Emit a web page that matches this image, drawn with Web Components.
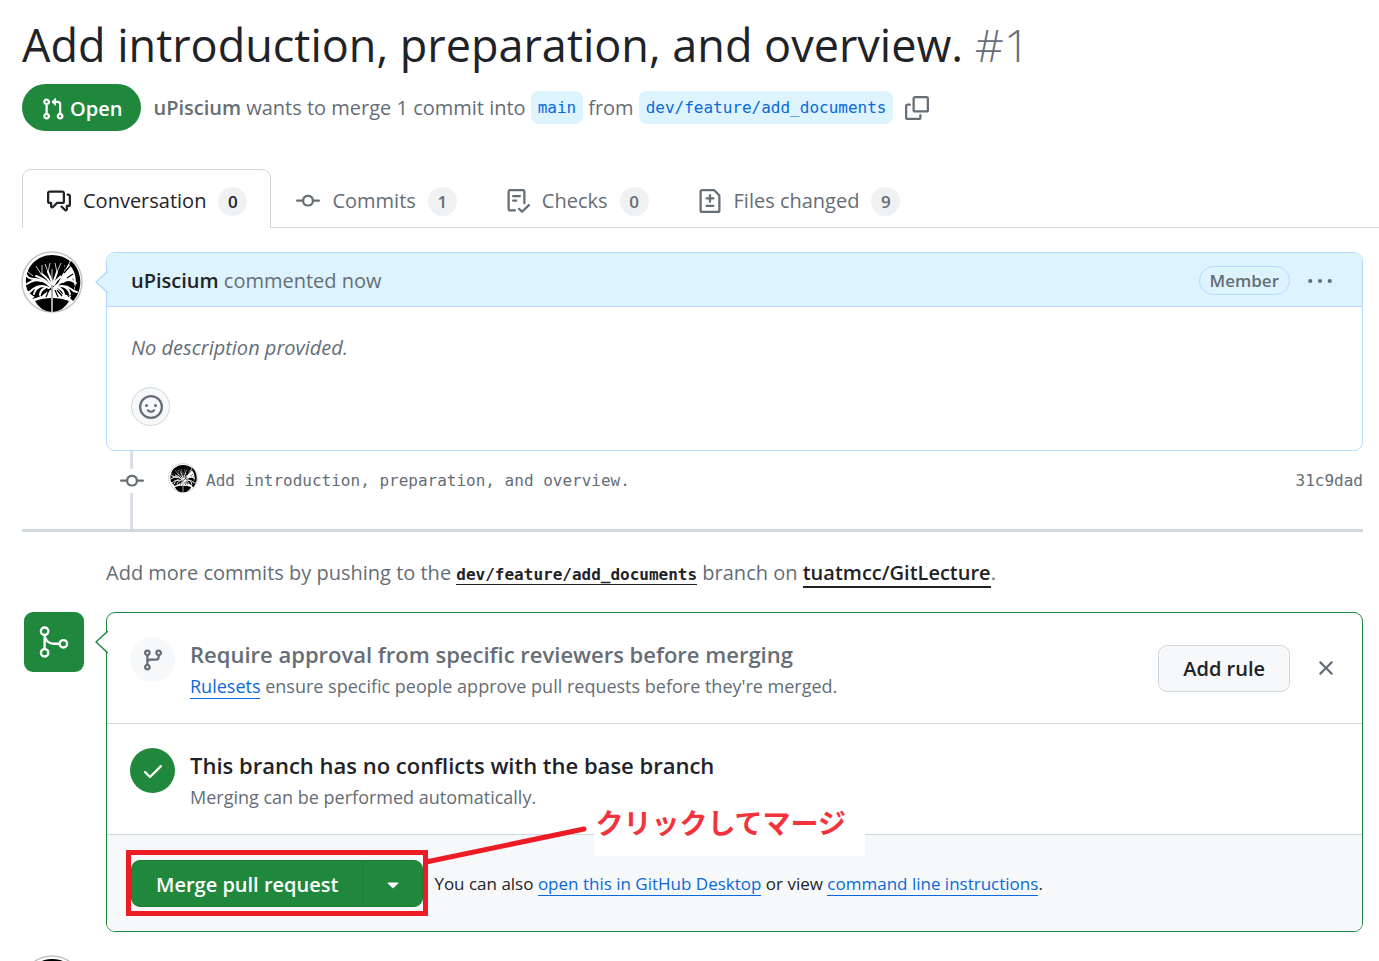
<!DOCTYPE html>
<html lang="en">
<head>
<meta charset="utf-8">
<title>Add introduction, preparation, and overview. #1</title>
<style>
  :root {
    --fg: #1f2328;
    --muted: #656d76;
    --accent: #0969da;
    --accent-subtle: #ddf4ff;
    --accent-border: #b6daff;
    --border: #d0d7de;
    --subtle: #f6f8fa;
    --green: #1f883d;
    --note: #ed1c24;
    --mono: "DejaVu Sans Mono", monospace;
    scrollbar-width: none;
  }
  body {
    margin: 0;
    background: #fff;
    color: var(--fg);
    font: 20px/30px "Open Sans", "Noto Sans", sans-serif;
  }
</style>
</head>
<body>
<pull-request-page></pull-request-page>

<script>
const define = (name, html, setup) => {
  const template = document.createElement('template');
  template.innerHTML = html;
  customElements.define(name, class extends HTMLElement {
    constructor() {
      super();
      this.attachShadow({ mode: 'open' }).append(template.content.cloneNode(true));
    }
    connectedCallback() { if (setup) setup(this, this.shadowRoot); }
  });
};

const ICONS = {
  'pull-request': '<path d="M1.5 3.25a2.25 2.25 0 1 1 3 2.122v5.256a2.251 2.251 0 1 1-1.5 0V5.372A2.25 2.25 0 0 1 1.5 3.25Zm5.677-.177L9.573.677A.25.25 0 0 1 10 .854V2.5h1A2.5 2.5 0 0 1 13.5 5v5.628a2.251 2.251 0 1 1-1.5 0V5a1 1 0 0 0-1-1h-1v1.646a.25.25 0 0 1-.427.177L7.177 3.427a.25.25 0 0 1 0-.354ZM3.75 2.5a.75.75 0 1 0 0 1.5.75.75 0 0 0 0-1.5Zm0 9.5a.75.75 0 1 0 0 1.5.75.75 0 0 0 0-1.5Zm8.25.75a.75.75 0 1 0 1.5 0 .75.75 0 0 0-1.5 0Z"/>',
  copy: '<path d="M0 6.75C0 5.784.784 5 1.75 5h1.5a.75.75 0 0 1 0 1.5h-1.5a.25.25 0 0 0-.25.25v7.5c0 .138.112.25.25.25h7.5a.25.25 0 0 0 .25-.25v-1.5a.75.75 0 0 1 1.5 0v1.5A1.75 1.75 0 0 1 9.25 16h-7.5A1.75 1.75 0 0 1 0 14.25Z"/><path d="M5 1.75C5 .784 5.784 0 6.75 0h7.5C15.216 0 16 .784 16 1.75v7.5A1.75 1.75 0 0 1 14.25 11h-7.5A1.75 1.75 0 0 1 5 9.25Zm1.75-.25a.25.25 0 0 0-.25.25v7.5c0 .138.112.25.25.25h7.5a.25.25 0 0 0 .25-.25v-7.5a.25.25 0 0 0-.25-.25Z"/>',
  discussion: '<path d="M1.75 1h8.5c.966 0 1.75.784 1.75 1.75v5.5A1.75 1.75 0 0 1 10.25 10H7.061l-2.574 2.573A1.458 1.458 0 0 1 2 11.543V10h-.25A1.75 1.75 0 0 1 0 8.25v-5.5C0 1.784.784 1 1.75 1ZM1.5 2.75v5.5c0 .138.112.25.25.25h1a.75.75 0 0 1 .75.75v2.19l2.72-2.72a.749.749 0 0 1 .53-.22h3.5a.25.25 0 0 0 .25-.25v-5.5a.25.25 0 0 0-.25-.25h-8.5a.25.25 0 0 0-.25.25Zm13 2a.25.25 0 0 0-.25-.25h-.5a.75.75 0 0 1 0-1.5h.5c.966 0 1.75.784 1.75 1.75v5.5A1.75 1.75 0 0 1 14.25 12H14v1.543a1.458 1.458 0 0 1-2.487 1.03L9.22 12.28a.749.749 0 0 1 .326-1.275.749.749 0 0 1 .734.215l2.22 2.22v-2.19a.75.75 0 0 1 .75-.75h1a.25.25 0 0 0 .25-.25Z"/>',
  commit: '<path d="M11.93 8.5a4.002 4.002 0 0 1-7.86 0H.75a.75.75 0 0 1 0-1.5h3.32a4.002 4.002 0 0 1 7.86 0h3.32a.75.75 0 0 1 0 1.5Zm-1.43-.75a2.5 2.5 0 1 0-5 0 2.5 2.5 0 0 0 5 0Z"/>',
  checklist: '<path d="M2.5 1.75v11.5c0 .138.112.25.25.25h3.17a.75.75 0 0 1 0 1.5H2.75A1.75 1.75 0 0 1 1 13.25V1.75C1 .784 1.784 0 2.75 0h8.5C12.216 0 13 .784 13 1.75v7.736a.75.75 0 0 1-1.5 0V1.75a.25.25 0 0 0-.25-.25h-8.5a.25.25 0 0 0-.25.25Zm13.274 9.537-4.557 4.449a.75.75 0 0 1-1.055-.008l-1.943-1.95a.75.75 0 0 1 1.062-1.058l1.419 1.425 4.026-3.932a.75.75 0 1 1 1.048 1.074ZM4.75 4h4.5a.75.75 0 0 1 0 1.5h-4.5a.75.75 0 0 1 0-1.5ZM4 7.75A.75.75 0 0 1 4.75 7h2a.75.75 0 0 1 0 1.5h-2A.75.75 0 0 1 4 7.75Z"/>',
  diff: '<path d="M1 1.75C1 .784 1.784 0 2.75 0h7.586c.464 0 .909.184 1.237.513l2.914 2.914c.329.328.513.773.513 1.237v9.586A1.75 1.75 0 0 1 13.25 16H2.75A1.75 1.75 0 0 1 1 14.25Zm1.75-.25a.25.25 0 0 0-.25.25v12.5c0 .138.112.25.25.25h10.5a.25.25 0 0 0 .25-.25V4.664a.25.25 0 0 0-.073-.177l-2.914-2.914a.25.25 0 0 0-.177-.073ZM8 3.25a.75.75 0 0 1 .75.75v1.5h1.5a.75.75 0 0 1 0 1.5h-1.5v1.5a.75.75 0 0 1-1.5 0V7h-1.5a.75.75 0 0 1 0-1.5h1.5V4A.75.75 0 0 1 8 3.25Zm-3 8a.75.75 0 0 1 .75-.75h4.5a.75.75 0 0 1 0 1.5h-4.5a.75.75 0 0 1-.75-.75Z"/>',
  smiley: '<circle cx="8" cy="8" r="7.25" fill="none" stroke="currentColor" stroke-width="1.5"/><circle cx="5" cy="7" r="1"/><circle cx="11" cy="7" r="1"/><path d="M5.9 10.2c1.1 1.3 3.1 1.3 4.2 0" fill="none" stroke="currentColor" stroke-width="1.4" stroke-linecap="round"/>',
  kebab: '<circle cx="1.5" cy="8" r="1.4"/><circle cx="8" cy="8" r="1.4"/><circle cx="14.5" cy="8" r="1.4"/>',
  branch: '<path d="M9.5 3.25a2.25 2.25 0 1 1 3 2.122V6A2.5 2.5 0 0 1 10 8.5H6a1 1 0 0 0-1 1v1.128a2.251 2.251 0 1 1-1.5 0V5.372a2.25 2.25 0 1 1 1.5 0v1.836A2.493 2.493 0 0 1 6 7h4a1 1 0 0 0 1-1v-.628A2.25 2.25 0 0 1 9.5 3.25Zm-6 0a.75.75 0 1 0 1.5 0 .75.75 0 0 0-1.5 0Zm8.25-.75a.75.75 0 1 0 0 1.5.75.75 0 0 0 0-1.5ZM4.25 12a.75.75 0 1 0 0 1.5.75.75 0 0 0 0-1.5Z"/>',
  merge: '<g fill="none" stroke="currentColor" stroke-width="1.05"><circle cx="3.83" cy="3.2" r="1.65"/><circle cx="3.83" cy="12.8" r="1.65"/><circle cx="12.17" cy="8.8" r="1.65"/><path d="M3.83 4.9v6.2M3.83 5.2c.2 2.200 2 3.6 4.2 3.6h2.400"/></g>',
  check: '<path d="M13.78 4.22a.75.75 0 0 1 0 1.06l-7.25 7.25a.75.75 0 0 1-1.06 0L2.22 9.28a.751.751 0 0 1 .018-1.042.751.751 0 0 1 1.042-.018L6 10.94l6.72-6.72a.75.75 0 0 1 1.06 0Z"/>',
  x: '<path d="M3.72 3.72a.75.75 0 0 1 1.06 0L8 6.94l3.22-3.22a.749.749 0 0 1 1.275.326.749.749 0 0 1-.215.734L9.06 8l3.22 3.22a.749.749 0 0 1-.326 1.275.749.749 0 0 1-.734-.215L8 9.06l-3.22 3.22a.751.751 0 0 1-1.042-.018.751.751 0 0 1-.018-1.042L6.94 8 3.72 4.78a.75.75 0 0 1 0-1.06Z"/>',
  caret: '<path d="m4.427 7.427 3.396 3.396a.25.25 0 0 0 .354 0l3.396-3.396A.25.25 0 0 0 11.396 7H4.604a.25.25 0 0 0-.177.427Z"/>'
};

define('gh-icon', `
  <style>
    :host { display: block; flex: none; width: 24px; height: 24px; }
    :host([size="large"]) { width: 36px; height: 36px; }
    svg { display: block; width: 100%; height: 100%; fill: currentColor; }
  </style>
  <svg viewBox="0 0 16 16" aria-hidden="true"></svg>`,
  (host, root) => { root.querySelector('svg').innerHTML = ICONS[host.getAttribute('name')]; });

define('gh-avatar', `
  <style>
    :host { display: block; flex: none; width: 62px; height: 62px; }
    :host([size="small"]) { width: 30px; height: 30px; }
    svg { display: block; width: 100%; height: 100%; }
  </style>
  <svg viewBox="0 0 62 62" role="img" aria-label="uPiscium">
    <defs><clipPath id="disc"><circle cx="31" cy="31" r="30"/></clipPath></defs>
    <circle cx="31" cy="31" r="30" fill="#fff" stroke="#c4c4c4" stroke-width="1.5"/>
    <g clip-path="url(#disc)">
      <path d="M5 32C4 16 16 4 31 4c7 0 13 2 18 6L36 34 14 46C8 43 5 39 5 32Z"/>
      <path d="M11 48 27 34l4 4-13 8Z"/>
      <path d="M34 34l18-7c2 6 2 12-1 18l-10-2Z"/>
      <path d="M14 50c10-4 24-4 34 0-4 7-10 11-17 11S18 57 14 50Z"/>
      <path d="M50 10c11 9 13 28 2 40l-3-3c8-11 8-24-1-34Z"/>
      <g fill="none" stroke="#fff" stroke-width="2" stroke-linecap="round">
        <path d="M30 36c-5-5-10-8-17-8-4 0-7-2-8-5M28 34c-3-6-8-7-13-9M30 34c-2-6-5-8-9-11M31 34c0-6-2-8-4-13M32 34c1-6 3-9 4-13M33 34c2-6 6-8 10-11"/>
        <path d="M28 37c-6-3-12-2-16 1-3 3-4 4-7 3M21 35c-5 1-7 4-8 8M24 37c-4 2-5 5-5 7M20 30c-5-2-10 0-14 3"/>
        <path d="M34 36c5-5 10-8 17-8M34 37c6-3 12-2 16 1 2 2 3 3 6 3M41 35c5 1 7 4 8 8M38 37c4 2 5 4 5 7M42 31c4-3 9-2 13 1"/>
      </g>
      <path d="M15 48 28 40h7l12 8c-10-3-22-3-32 0Z" fill="#fff"/>
      <g fill="none" stroke="#fff" stroke-width=".8">
        <path d="M20 23l-5-8M21 23v-9M27 21l-3-8M27 21l2-9M36 21l-2-9M36 21l4-9M12 25l-6-5M43 23l1-9M31 33V18"/>
      </g>
      <g fill="none" stroke="#000" stroke-width="1.2">
        <path d="M43 22l7-8M40 25l5-11M46 27l6-4M45 33c4-1 7 0 9 3M36 39l5 6M26 39l-6 6M44 40l4 6M28 39l-3 7M34 39l3 7"/>
      </g>
      <path d="M31 34v28" stroke="#aaa" stroke-width="2"/>
    </g>
  </svg>`);

define('branch-name', `
  <style>
    :host { display: block; }
    a { display: block; padding: 0 7px; border-radius: 8px; background: var(--accent-subtle); color: var(--accent);
        font: 16px/33px var(--mono); text-decoration: none; white-space: nowrap; }
  </style>
  <a href="#"><slot></slot></a>`);

define('pr-header', `
  <style>
    :host { display: block; padding: 12px 16px 0 22px; }
    h1 { margin: 0; font-size: 45px; line-height: 66px; font-weight: 400; }
    h1 span { color: var(--muted); font-weight: 300; }
    .meta { display: flex; align-items: center; gap: 12px; margin-top: 6px; color: var(--muted); }
    .state { display: flex; align-items: center; gap: 5px; box-sizing: border-box; height: 47px; padding: 3px 19px 0;
             border-radius: 24px; background: var(--green); color: #fff; font-weight: 600; }
    .sentence { display: flex; align-items: center; gap: 5px; white-space: nowrap; }
    b { font-weight: 600; }
    button { border: 0; background: none; padding: 0; color: inherit; }
  </style>
  <h1>Add introduction, preparation, and overview. <span>#1</span></h1>
  <div class="meta">
    <span class="state"><gh-icon name="pull-request"></gh-icon>Open</span>
    <div class="sentence">
      <span><b>uPiscium</b> wants to merge 1 commit into</span>
      <branch-name>main</branch-name>
      <span>from</span>
      <branch-name>dev/feature/add_documents</branch-name>
    </div>
    <button type="button" aria-label="Copy"><gh-icon name="copy"></gh-icon></button>
  </div>`);

define('pr-tab', `
  <style>
    :host { display: block; color: var(--muted); }
    a { display: flex; align-items: center; gap: 12px; box-sizing: border-box; height: 59px; padding: 4px 23px 0 24px;
        border: 1px solid transparent; border-bottom: 0; border-radius: 9px 9px 0 0; color: inherit; text-decoration: none; white-space: nowrap; }
    :host([selected]) { color: var(--fg); }
    :host([selected]) a { border-color: var(--border); background: #fff; }
    .count { width: 29px; height: 29px; border-radius: 15px; background: #eff1f3; text-align: center;
             font-size: 17px; line-height: 29px; font-weight: 600; }
  </style>
  <a href="#"><gh-icon></gh-icon><slot></slot><span class="count"></span></a>`,
  (host, root) => {
    const icon = document.createElement('gh-icon');
    icon.setAttribute('name', host.getAttribute('icon'));
    root.querySelector('gh-icon').replaceWith(icon);
    root.querySelector('.count').textContent = host.getAttribute('count');
  });

define('pr-tabs', `
  <style>
    :host { display: block; margin-top: 38px; padding-left: 22px; }
    nav { display: flex; background: linear-gradient(var(--border), var(--border)) bottom / 100% 1px no-repeat; }
  </style>
  <nav aria-label="Pull request"><slot></slot></nav>`);

define('box-pointer', `
  <style>
    :host { position: absolute; top: 18px; left: -12px; width: 13px; height: 22px; }
    svg { display: block; }
  </style>
  <svg width="13" height="22" viewBox="0 0 13 22" aria-hidden="true">
    <path d="M13 0 1 11 13 22" fill="var(--pointer-fill)" stroke="var(--pointer-line)" stroke-width="1.5"/>
  </svg>`);

define('pr-comment', `
  <style>
    :host { display: flex; align-items: flex-start; gap: 23px; padding: 0 16px 0 21px; }
    article { position: relative; flex: 1; border: 1px solid var(--accent-border); border-radius: 9px;
              --pointer-fill: var(--accent-subtle); --pointer-line: var(--accent-border); margin-top: 1px; }
    header { display: flex; align-items: center; height: 51px; padding: 2px 24px 0; border-bottom: 1px solid var(--accent-border);
             border-radius: 8px 8px 0 0; background: var(--accent-subtle); color: var(--muted); }
    header p { flex: 1; margin: 0; }
    b { font-weight: 600; color: var(--fg); }
    .role { padding: 0 10px; border: 1px solid var(--accent-border); border-radius: 15px; font-size: 17px; line-height: 27px; font-weight: 600; }
    button { border: 0; background: none; padding: 0; color: inherit; }
    .menu { margin: 0 6px 0 18px; }
    .body { padding: 26px 24px 24px; color: var(--muted); }
    .body p { margin: 0 0 24px; font-style: italic; }
    .react { display: grid; place-items: center; width: 39px; height: 39px; border: 1px solid var(--border); border-radius: 50%; background: var(--subtle); }
  </style>
  <gh-avatar></gh-avatar>
  <article>
    <box-pointer></box-pointer>
    <header>
      <p><b>uPiscium</b> commented now</p>
      <span class="role">Member</span>
      <button class="menu" type="button" aria-label="Show options"><gh-icon name="kebab"></gh-icon></button>
    </header>
    <div class="body">
      <p>No description provided.</p>
      <button class="react" type="button" aria-label="Add reaction"><gh-icon name="smiley"></gh-icon></button>
    </div>
  </article>`);

define('pr-commit', `
  <style>
    :host { display: block; margin: 0 16px 0 22px; border-bottom: 3px solid var(--border); color: var(--muted); }
    .row { display: grid; grid-template-columns: 24px 46px 1fr auto; column-gap: 8px; padding-left: 98px; height: 78px; }
    .rail { display: flex; flex-direction: column; }
    .rail::before, .rail::after { content: ""; width: 3px; margin-left: 10px; background: #d8dee4; }
    .rail::before { height: 18px; }
    .rail::after { flex: 1; }
    gh-avatar { margin: 12px 0 0 16px; }
    code { font: 16px/30px var(--mono); margin-top: 15px; }
  </style>
  <div class="row">
    <div class="rail"><gh-icon name="commit"></gh-icon></div>
    <gh-avatar size="small"></gh-avatar>
    <code>Add introduction, preparation, and overview.</code>
    <code>31c9dad</code>
  </div>`);

define('push-hint', `
  <style>
    :host { display: block; padding: 26px 16px 0 106px; color: var(--muted); }
    p { margin: 0; }
    a { color: var(--fg); font-weight: 600; text-decoration: none; border-bottom: 2px solid; }
    a.branch { border-bottom-width: 1px; font: 700 16px/20px var(--mono); }
  </style>
  <p>Add more commits by pushing to the <a class="branch" href="#">dev/feature/add_documents</a> branch on <a href="#">tuatmcc/GitLecture</a>.</p>`);

define('merge-item', `
  <style>
    :host { display: flex; align-items: flex-start; gap: 15px; padding: 24px 24px 24px 23px; border-bottom: 1px solid var(--border); }
    .badge { display: grid; place-items: center; width: 45px; height: 45px; border-radius: 50%; background: var(--subtle); color: var(--muted); }
    :host([passed]) .badge { background: var(--green); color: #fff; }
    .text { flex: 1; font-size: 18px; line-height: 26px; color: var(--muted); }
    h3 { margin: 0 0 2px; font-size: 22px; line-height: 34px; font-weight: 600; }
    :host([passed]) h3 { color: var(--fg); }
    .actions { align-self: center; display: flex; align-items: center; }
  </style>
  <span class="badge"><slot name="icon"></slot></span>
  <div class="text"><h3><slot name="title"></slot></h3><slot></slot></div>
  <div class="actions"><slot name="actions"></slot></div>`);

define('callout-note', `
  <style>
    :host { display: block; position: relative; width: max-content; }
    .frame { position: absolute; inset: -10px -5px -9px -5px; border: 5px solid var(--note); }
    svg { position: absolute; left: 100%; top: -36px; overflow: visible; }
    .label { position: absolute; left: calc(100% + 171px); top: -69px; width: 271px; height: 65px; box-sizing: border-box;
             padding: 13px 0 0 1px; background: #fff; color: #f2333b; white-space: nowrap;
             font: 700 28px/36px "Noto Sans CJK JP", sans-serif; }
  </style>
  <slot></slot>
  <div class="frame"></div>
  <svg width="170" height="48" aria-hidden="true"><path d="M3 38 161 5" stroke="var(--note)" stroke-width="5" stroke-linecap="round"/></svg>
  <div class="label" lang="ja">クリックしてマージ</div>`);

define('merge-box', `
  <style>
    :host { display: flex; align-items: flex-start; gap: 22px; padding: 24px 16px 0 24px; }
    .status { display: grid; place-items: center; width: 60px; height: 60px; border-radius: 9px; background: var(--green); color: #fff; }
    section { position: relative; flex: 1; border: 1px solid var(--green); border-radius: 9px; --pointer-fill: #fff; --pointer-line: var(--green); }
    a { color: var(--accent); text-decoration: none; border-bottom: 1px solid; }
    button { font: inherit; }
    .rule { height: 47px; padding: 2px 24px 0; border: 1px solid var(--border); border-radius: 9px; background: var(--subtle);
            color: var(--fg); font-size: 20px; font-weight: 600; }
    .close { margin: 0 0 0 24px; padding: 0; border: 0; background: none; color: var(--muted); }
    footer { display: flex; align-items: center; gap: 11px; padding: 25px 24px 24px; background: var(--subtle);
             border-radius: 0 0 8px 8px; font-size: 17px; line-height: 24px; white-space: nowrap; }
    .split { display: flex; color: #fff; }
    .split button { height: 47px; border: 1px solid #1c7c38; background: var(--green); color: inherit; font-size: 20px; font-weight: 600; }
    .split .main { padding: 2px 24px 0; border-radius: 9px 0 0 9px; }
    .split .more { display: grid; place-items: center; width: 61px; margin-left: -1px; border-radius: 0 9px 9px 0; }
  </style>
  <div class="status"><gh-icon name="merge" size="large"></gh-icon></div>
  <section>
    <box-pointer></box-pointer>
    <merge-item>
      <gh-icon slot="icon" name="branch"></gh-icon>
      <span slot="title">Require approval from specific reviewers before merging</span>
      <a href="#">Rulesets</a> ensure specific people approve pull requests before they're merged.
      <button slot="actions" class="rule" type="button">Add rule</button>
      <button slot="actions" class="close" type="button" aria-label="Dismiss"><gh-icon name="x"></gh-icon></button>
    </merge-item>
    <merge-item passed>
      <gh-icon slot="icon" name="check"></gh-icon>
      <span slot="title">This branch has no conflicts with the base branch</span>
      Merging can be performed automatically.
    </merge-item>
    <footer>
      <callout-note>
        <div class="split">
          <button class="main" type="button">Merge pull request</button>
          <button class="more" type="button" aria-label="Select merge method"><gh-icon name="caret"></gh-icon></button>
        </div>
      </callout-note>
      <span>You can also <a href="#">open this in GitHub Desktop</a> or view <a href="#">command line instructions</a>.</span>
    </footer>
  </section>`);

define('pull-request-page', `
  <style>
    :host { display: block; }
    pr-comment { margin-top: 23px; }
    .reply { padding: 23px 0 0 21px; height: 8px; overflow: hidden; }
  </style>
  <pr-header></pr-header>
  <pr-tabs>
    <pr-tab icon="discussion" count="0" selected>Conversation</pr-tab>
    <pr-tab icon="commit" count="1">Commits</pr-tab>
    <pr-tab icon="checklist" count="0">Checks</pr-tab>
    <pr-tab icon="diff" count="9">Files changed</pr-tab>
  </pr-tabs>
  <main>
    <pr-comment></pr-comment>
    <pr-commit></pr-commit>
    <push-hint></push-hint>
    <merge-box></merge-box>
    <div class="reply"><gh-avatar></gh-avatar></div>
  </main>`);
</script>
</body>
</html>
